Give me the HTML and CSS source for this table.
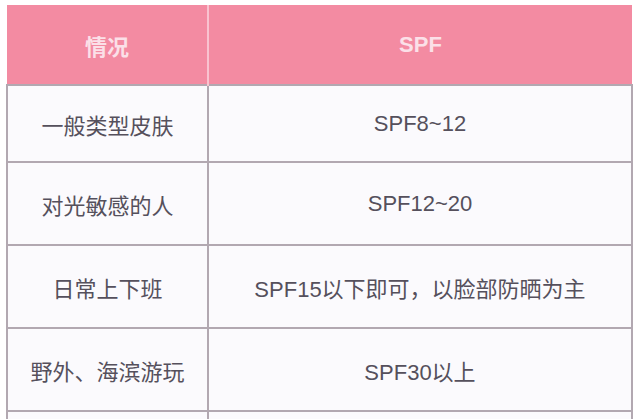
FILE: index.html
```html
<!DOCTYPE html>
<html lang="zh">
<head>
<meta charset="utf-8">
<link rel="stylesheet" href="styles.css">
</head>
<body>
<div class="wrap">
<table class="spf">
  <thead>
    <tr class="head"><th class="c1">情况</th><th class="c2">SPF</th></tr>
  </thead>
  <tbody>
    <tr class="r1"><td>一般类型皮肤</td><td>SPF8~12</td></tr>
    <tr class="r"><td>对光敏感的人</td><td>SPF12~20</td></tr>
    <tr class="r"><td>日常上下班</td><td>SPF15以下即可，以脸部防晒为主</td></tr>
    <tr class="r"><td>野外、海滨游玩</td><td>SPF30以上</td></tr>
    <tr class="r"><td></td><td></td></tr>
  </tbody>
</table>
</div>
</body>
</html>
```
FILE: styles.css
```css
html, body {
  margin: 0;
  padding: 0;
  background: #ffffff;
  overflow: hidden;
}
.wrap {
  padding: 5px 0 0 6px;
  height: 414px;
  overflow: hidden;
}
.spf {
  border-collapse: collapse;
  width: 627px;
  table-layout: fixed;
  font-family: "Liberation Sans", "Noto Sans CJK SC", sans-serif;
  font-size: 22px;
  color: #55505c;
}
.spf th {
  background: #f38ba2;
  color: #fbe0e8;
  font-weight: bold;
  font-size: 22px;
  height: 79px;
  padding: 0;
  text-align: center;
}
.spf th.c1 {
  width: 200px;
  border-right: 2px solid #f9c3d0;
}
.spf td {
  border: 2px solid #b2a8b1;
  background: #fbfafd;
  text-align: center;
  padding: 0;
  height: 81px;
}
.spf tr.r1 td {
  height: 75px;
}
.spf tbody td:first-child {
  font-family: "Noto Sans CJK SC", sans-serif;
  font-size: 22px;
}
```
